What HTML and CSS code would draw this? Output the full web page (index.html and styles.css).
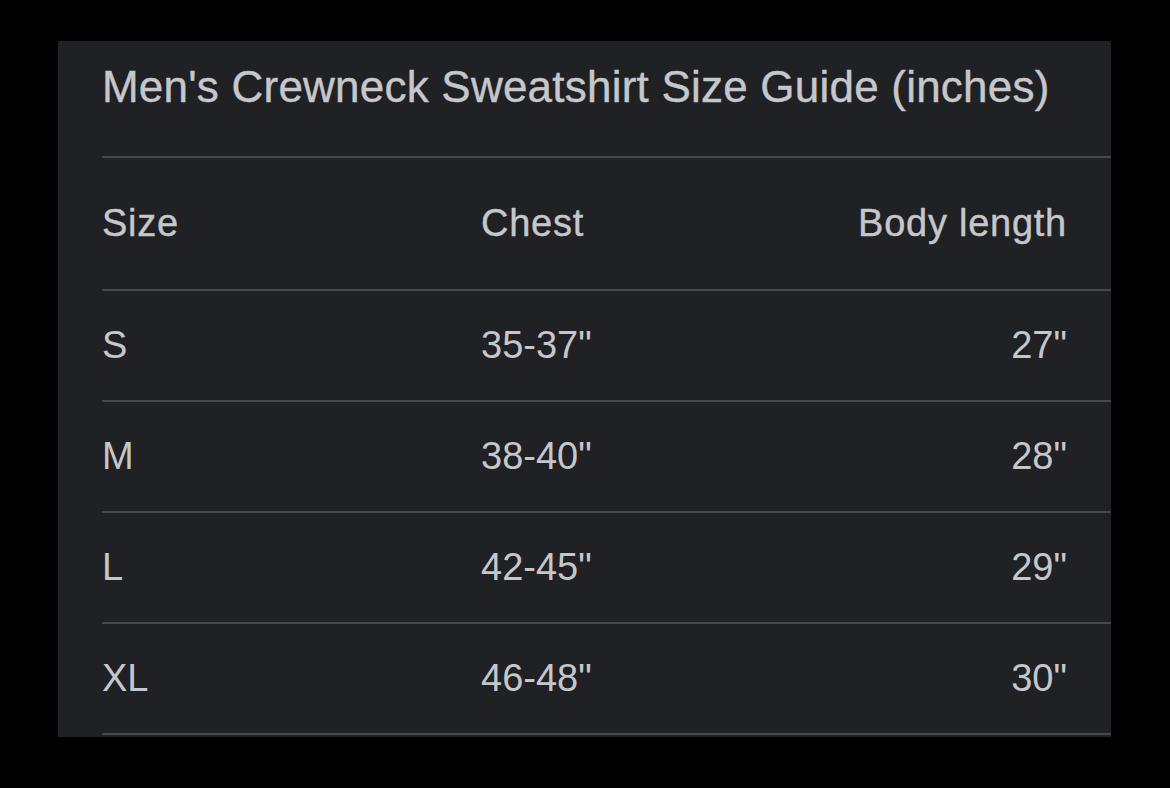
FILE: index.html
```html
<!DOCTYPE html>
<html>
<head>
<meta charset="utf-8">
<link rel="stylesheet" href="styles.css">
</head>
<body>
<div class="panel">
  <h1 class="title">Men's Crewneck Sweatshirt Size Guide (inches)</h1>
  <div class="table">
    <div class="row head"><span>Size</span><span>Chest</span><span class="num">Body length</span></div>
    <div class="row"><span>S</span><span>35-37"</span><span class="num">27"</span></div>
    <div class="row"><span>M</span><span>38-40"</span><span class="num">28"</span></div>
    <div class="row"><span>L</span><span>42-45"</span><span class="num">29"</span></div>
    <div class="row"><span>XL</span><span>46-48"</span><span class="num">30"</span></div>
  </div>
</div>
</body>
</html>
```
FILE: styles.css
```css
html, body {
  margin: 0;
  padding: 0;
  background: #000;
}
body {
  width: 1170px;
  height: 788px;
  overflow: hidden;
  font-family: "Liberation Sans", Arial, sans-serif;
  color: #c6c7cb;
}
.panel {
  margin: 41px 0 0 58px;
  width: 1053px;
  height: 696px;
  box-sizing: border-box;
  background: #202124;
  padding-left: 44px;
}
.title {
  margin: 0;
  padding: 19px 0 42px;
  font-size: 44px;
  line-height: 54px;
  font-weight: normal;
  letter-spacing: 0.22px;
  -webkit-text-stroke: 0.4px #c6c7cb;
  white-space: nowrap;
}
.row {
  display: grid;
  grid-template-columns: 379px 1fr auto;
  border-top: 2px solid #46484c;
  font-size: 38px;
  line-height: 45px;
  padding: 32px 44px 32px 0;
}
.row.head {
  padding: 43px 44px 43px 0;
  letter-spacing: 0.75px;
  -webkit-text-stroke: 0.4px #c6c7cb;
}
.row:last-child {
  border-bottom: 2px solid #46484c;
}
.num {
  text-align: right;
}
```
